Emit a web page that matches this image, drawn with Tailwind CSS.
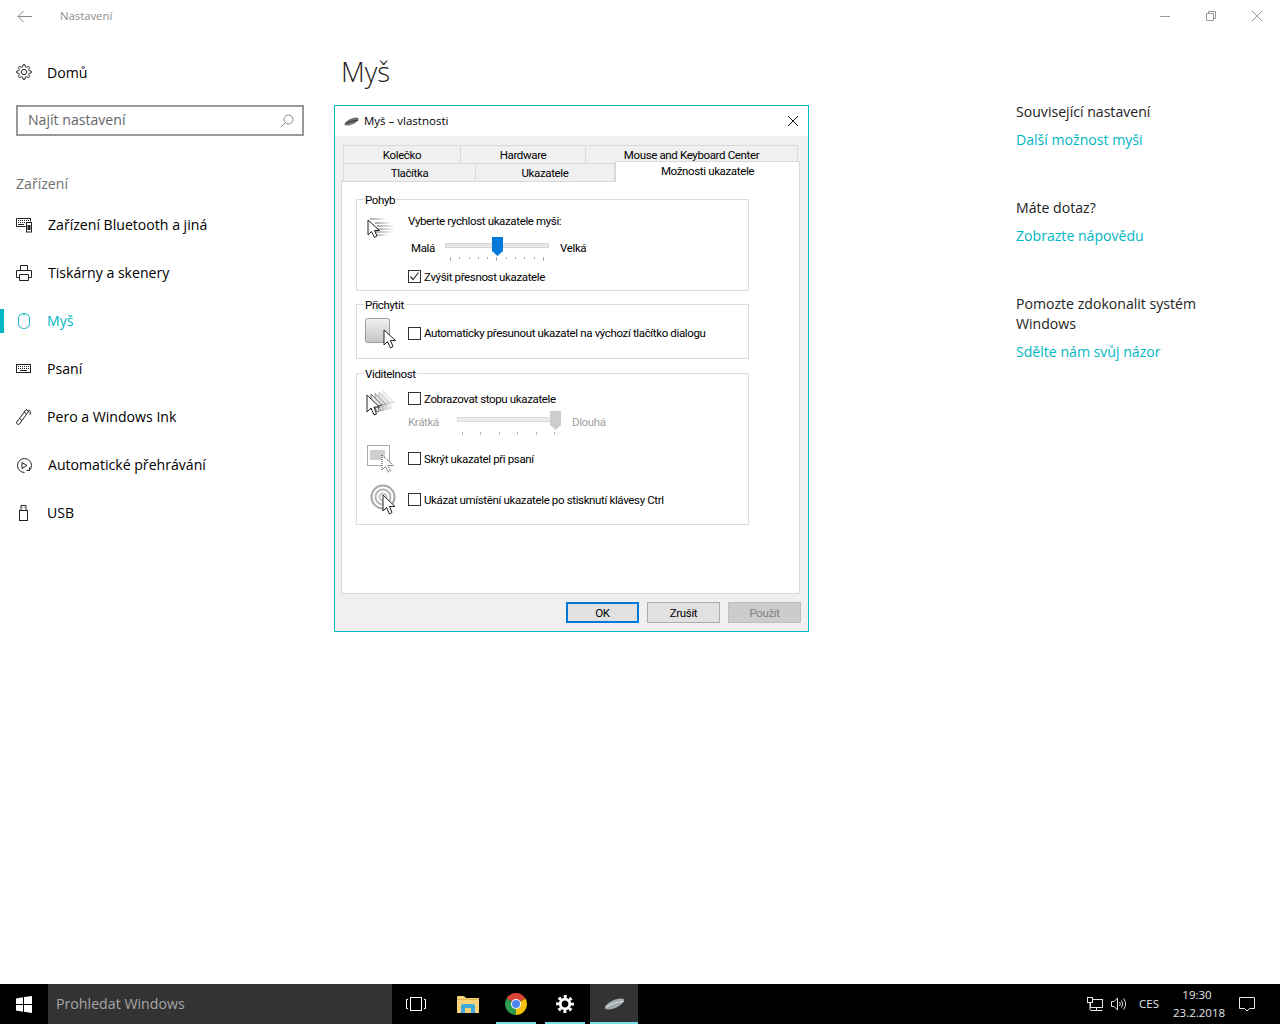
<!DOCTYPE html>
<html lang="cs">
<head>
<meta charset="UTF-8">
<meta name="viewport" content="width=device-width, initial-scale=1.0">
<title>Nastavení</title>
<script src="https://cdn.jsdelivr.net/npm/@tailwindcss/browser@4"></script>
</head>
<body class="font-['Open_Sans',sans-serif] text-black bg-white">
<div class="flex flex-col w-[1280px] h-[1024px] overflow-hidden">

  <!-- title bar -->
  <header class="flex items-center h-8 shrink-0">
    <svg class="ml-[17px] w-[15px] h-[13px]" viewBox="0 0 15 13" fill="none" stroke="#8a8a8a"><path d="M15 6.500H1M6.500 1L1 6.500 6.500 12"/></svg>
    <span class="ml-[28px] text-[11.3px] leading-4 text-[#8a8a8a]">Nastavení</span>
    <div class="ml-auto flex items-center">
      <svg class="w-[10px] h-[10px] mr-[36px]" viewBox="0 0 10 10" stroke="#999"><path d="M0 5.500H10"/></svg>
      <svg class="w-[10px] h-[10px] mr-[36px]" viewBox="0 0 10 10" fill="none" stroke="#999"><path d="M.5 2.500h7v7h-7zM2.500 2.500v-2h7v7h-2"/></svg>
      <svg class="w-[10px] h-[10px] mr-[18px]" viewBox="0 0 10 10" stroke="#999"><path d="M0 0L10 10M10 0L0 10"/></svg>
    </div>
  </header>

  <main class="flex flex-1 min-h-0">
    <!-- left menu -->
    <aside class="w-[334px] shrink-0">
      <div class="flex items-center h-12 mt-4 pl-4 text-[14.1px]">
        <svg class="w-4 h-4" viewBox="-8.500 -8.500 17 17" fill="none" stroke="#222" stroke-width="1">
          <defs><path id="tooth" d="M-1.280-5.550L-1.080-7.720H1.080L1.280-5.550A5.700 5.700 0 0 1 3.020-4.830"/></defs>
          <use href="#tooth"/><use href="#tooth" transform="rotate(45)"/><use href="#tooth" transform="rotate(90)"/><use href="#tooth" transform="rotate(135)"/><use href="#tooth" transform="rotate(180)"/><use href="#tooth" transform="rotate(225)"/><use href="#tooth" transform="rotate(270)"/><use href="#tooth" transform="rotate(315)"/>
          <circle r="2.800"/>
        </svg>
        <span class="ml-[15px] mt-px">Domů</span>
      </div>
      <div class="ml-4 mt-[9px] w-[288px] h-[31px] border-2 border-[#999] flex items-center pl-[10px] pr-2">
        <span class="text-[14.1px] text-[#666] -mt-px">Najít nastavení</span>
        <svg class="ml-auto w-[14px] h-[14px]" viewBox="0 0 14 14" fill="none" stroke="#888"><circle cx="8.500" cy="5.500" r="4.500"/><path d="M5.200 8.800L.7 13.300"/></svg>
      </div>
      <div class="ml-4 mt-[37px] mb-[6px] h-[22px] leading-[22px] text-[14.1px] text-[#6f6f6f]">Zařízení</div>
      <nav class="text-[14.1px]">
        <a class="flex items-center h-12">
          <span class="w-1 h-6"></span>
          <svg class="ml-3 w-4 h-4" viewBox="0 0 16 16" fill="none" stroke="#222"><path d="M.5 1.500h14v3M.5 1.500v8h9"/><path d="M2 3.500h1M4 3.500h1M6 3.500h1M8 3.500h1M10 3.500h1M12 3.500h1M2 5.500h1M4 5.500h1M6 5.500h1M8 5.500h1M2 7.500h6"/><rect x="10.500" y="5.500" width="5" height="9.500" fill="#fff"/><rect x="11.500" y="8" width="3" height="5" fill="#222" stroke="none"/></svg>
          <span class="ml-[16px]">Zařízení Bluetooth a jiná</span>
        </a>
        <a class="flex items-center h-12">
          <span class="w-1 h-6"></span>
          <svg class="ml-3 w-4 h-4" viewBox="0 0 16 16" fill="none" stroke="#222"><path d="M4.500 5.500v-5h7v5M3.500 12.500h-3v-7h15v7h-3"/><path d="M3.500 9.500h9v6h-9z"/></svg>
          <span class="ml-[16px]">Tiskárny a skenery</span>
        </a>
        <a class="flex items-center h-12 text-[#00b7c3]">
          <span class="w-1 h-6 bg-[#00b7c3]"></span>
          <svg class="ml-3 w-4 h-4" viewBox="0 0 16 16" fill="none" stroke="#00b7c3"><rect x="2.500" y=".5" width="11" height="15" rx="5"/><path d="M8 .5v2"/></svg>
          <span class="ml-[15px]">Myš</span>
        </a>
        <a class="flex items-center h-12">
          <span class="w-1 h-6"></span>
          <svg class="ml-3 w-4 h-4" viewBox="0 0 16 16" fill="none" stroke="#222"><rect x=".5" y="3.500" width="14" height="8"/><path d="M2 5.500h11M2 7.500h11" stroke-dasharray="1 1"/><path d="M4 9.500h7"/></svg>
          <span class="ml-[15px]">Psaní</span>
        </a>
        <a class="flex items-center h-12">
          <span class="w-1 h-6"></span>
          <svg class="ml-3 w-4 h-4" viewBox="0 0 16 16" fill="none" stroke="#222"><path d="M10 .5L12.500 2.500 6 11.500 3.500 9.500zM12 1c3 1 3.500 3 1.500 5M13 3.500l1 1M3.500 9.500L.8 13a1.700 1.700 0 0 0 2.700 2L6 11.500M8 3l2.500 2"/></svg>
          <span class="ml-[15px]">Pero a Windows Ink</span>
        </a>
        <a class="flex items-center h-12">
          <span class="w-1 h-6"></span>
          <svg class="ml-3 w-4 h-4" viewBox="0 0 16 16" fill="none" stroke="#222"><path d="M8.500 15.500A7 7 0 1 1 15.500 8.500a7 7 0 0 1-2 4.900M13.500 10.500v3h-3"/><path d="M6 5.500v6l5-3z"/></svg>
          <span class="ml-[16px]">Automatické přehrávání</span>
        </a>
        <a class="flex items-center h-12">
          <span class="w-1 h-6"></span>
          <svg class="ml-3 w-4 h-4" viewBox="0 0 16 16" fill="none" stroke="#222"><rect x="3.500" y="5.500" width="8" height="10"/><path d="M5 5.500v-5h5v5M6.500 2.500h.5M8 2.500h.5"/></svg>
          <span class="ml-[15px]">USB</span>
        </a>
      </nav>
    </aside>

    <!-- content -->
    <section class="w-[682px] shrink-0">
      <h1 class="pl-[7px] h-[73px] pt-[20px] text-[27.5px] leading-10 font-light text-[#222]">Myš</h1>

      <!-- dialog -->
      <div class="w-[475px] h-[527px] border border-[#00b7c3] bg-[#f0f0f0] font-['Roboto',sans-serif] text-[11.5px] tracking-[-0.36px] leading-[14px]">
        <div class="flex items-center h-[30px] bg-white pl-[9px] pr-[10px]">
          <svg class="w-[15px] h-[9px]" viewBox="0 0 15 9"><path d="M1 6.500C3 3 8 .5 12.500 .5c2 0 2.500 1.500 1.500 3-1.500 2.500-7 5-11 5-2.500 0-3-1-2-2z" fill="#6e7275"/><path d="M1 6.500C4 5 9 4 14 3" stroke="#333" fill="none"/></svg>
          <span class="ml-[5px] font-['Open_Sans',sans-serif] tracking-normal text-[11.500px]">Myš – vlastnosti</span>
          <svg class="ml-auto w-[10px] h-[10px]" viewBox="0 0 10 10" stroke="#111"><path d="M0 0L10 10M10 0L0 10"/></svg>
        </div>

        <div class="pt-[9px] pl-[6px]">
          <!-- tabs, top row -->
          <div class="flex ml-[2px] w-[455px] h-[18px]">
            <div class="w-[118px] h-[18px] border border-b-0 border-[#d9d9d9] text-center leading-[18px]">Kolečko</div>
            <div class="w-[125px] h-[18px] border border-b-0 border-l-0 border-[#d9d9d9] text-center leading-[18px]">Hardware</div>
            <div class="w-[212px] h-[18px] border border-b-0 border-l-0 border-[#d9d9d9] text-center leading-[18px]">Mouse and Keyboard Center</div>
          </div>
          <!-- tabs, bottom row -->
          <div class="flex ml-[2px] h-[18px]">
            <div class="w-[133px] h-[19px] border border-b-0 border-[#d9d9d9] text-center leading-[18px]">Tlačítka</div>
            <div class="w-[139px] h-[19px] border border-b-0 border-l-0 border-[#d9d9d9] text-center leading-[18px]">Ukazatele</div>
            <div class="relative z-10 w-[185px] h-[21px] -mt-[2px] border border-b-0 border-[#d9d9d9] bg-white text-center leading-[18px]">Možnosti ukazatele</div>
          </div>

          <!-- tab page -->
          <div class="w-[459px] h-[413px] border border-[#d9d9d9] bg-white pt-[17px] pl-[14px]">

            <div class="w-[393px] h-[92px] border border-[#dcdcdc]">
              <div class="-mt-2 ml-[7px] w-fit h-4 px-px bg-white leading-4">Pohyb</div>
              <div class="flex">
                <div class="w-[51px] pl-[10px] pt-[10px]">
                  <svg class="w-[29px] h-[24px]" viewBox="0 0 29 24" fill="none">
                    <defs><linearGradient id="fade"><stop offset="0" stop-color="#aaa"/><stop offset="1" stop-color="#fff"/></linearGradient></defs>
                    <rect x="3" y="0" width="17" height="2" fill="url(#fade)"/><rect x="8" y="4" width="17" height="2" fill="url(#fade)"/><rect x="10" y="7" width="18" height="2" fill="url(#fade)"/><rect x="10" y="10" width="18" height="2" fill="url(#fade)"/><rect x="8" y="13" width="19" height="2" fill="url(#fade)"/><rect x="7" y="16" width="15" height="2" fill="url(#fade)"/>
                    <path d="M1 2V17L4.500 13.500 7.500 19.500 10 18 7.500 12.500H12.500Z" fill="#fff" stroke="#222"/>
                  </svg>
                </div>
                <div>
                  <div class="mt-[6px] h-[14px]">Vyberte rychlost ukazatele myši:</div>
                  <div class="flex mt-2 h-[34px]">
                    <span class="w-[37px] pl-[3px] mt-[5px]">Malá</span>
                    <div class="relative w-[104px] h-[34px]">
                      <div class="mt-[7px] h-[5px] border border-[#d6d6d6] bg-[#e7e7e7]"></div>
                      <svg class="absolute left-[47px] top-px w-[11px] h-[19px]" viewBox="0 0 11 19"><path d="M0 0H11V14L5.500 19 0 14Z" fill="#0078d7"/></svg>
                      <div class="flex justify-between mt-[9px] mx-[5px] items-start">
                        <i class="w-px h-[4px] bg-[#aaa]"></i><i class="w-px h-[2px] bg-[#aaa]"></i><i class="w-px h-[2px] bg-[#aaa]"></i><i class="w-px h-[2px] bg-[#aaa]"></i><i class="w-px h-[2px] bg-[#aaa]"></i><i class="w-px h-[4px] bg-[#aaa]"></i><i class="w-px h-[2px] bg-[#aaa]"></i><i class="w-px h-[2px] bg-[#aaa]"></i><i class="w-px h-[2px] bg-[#aaa]"></i><i class="w-px h-[2px] bg-[#aaa]"></i><i class="w-px h-[4px] bg-[#aaa]"></i>
                      </div>
                    </div>
                    <span class="ml-[11px] mt-[5px]">Velká</span>
                  </div>
                  <div class="flex items-center h-[13px]">
                    <span class="w-[13px] h-[13px] border border-[#333] bg-white shrink-0">
                      <svg class="w-[11px] h-[11px]" viewBox="0 0 11 11" fill="none" stroke="#333" stroke-width="1.200"><path d="M1.500 5.500L4 8.500 9.500 1.500"/></svg>
                    </span>
                    <span class="ml-[3px]">Zvýšit přesnost ukazatele</span>
                  </div>
                </div>
              </div>
            </div>

            <div class="mt-[13px] w-[393px] h-[55px] border border-[#dcdcdc]">
              <div class="-mt-2 ml-[7px] w-fit h-4 px-px bg-white leading-4">Přichytit</div>
              <div class="flex">
                <div class="w-[51px] pl-2 pt-[5px]">
                  <svg class="w-[33px] h-[32px]" viewBox="0 0 33 32">
                    <defs><linearGradient id="snap" x2="0" y2="1"><stop offset="0" stop-color="#f2f2f2"/><stop offset="1" stop-color="#c4c4c4"/></linearGradient></defs>
                    <rect x=".5" y=".5" width="24" height="24" rx="2" fill="url(#snap)" stroke="#9a9a9a"/>
                    <path d="M19 12V27L22.500 23.500 25.500 30 28 28.500 25.500 22.500H30.500Z" fill="#fff" stroke="#222"/>
                  </svg>
                </div>
                <div class="flex items-center h-[13px] mt-[14px]">
                  <span class="w-[13px] h-[13px] border border-[#333] bg-white shrink-0"></span>
                  <span class="ml-[3px] -mt-px">Automaticky přesunout ukazatel na výchozí tlačítko dialogu</span>
                </div>
              </div>
            </div>

            <div class="mt-[14px] w-[393px] h-[152px] border border-[#dcdcdc]">
              <div class="-mt-2 ml-[7px] w-fit h-4 px-px bg-white leading-4">Viditelnost</div>
              <div class="flex h-[60px]">
                <div class="w-[51px] pl-[9px] pt-[9px]">
                  <svg class="w-[32px] h-[26px]" viewBox="0 0 32 26">
                    <path d="M17 0V16L20.500 12.500 23 18 25.500 17 23 11.500H28Z" fill="#f2f2f2" stroke="#dcdcdc"/>
                    <path d="M13 1V17L16.500 13.500 19 19 21.500 18 19 12.500H24Z" fill="#e6e6e6" stroke="#c4c4c4"/>
                    <path d="M9 2V18L12.500 14.500 15 20 17.500 19 15 13.500H20Z" fill="#ddd" stroke="#a0a0a0"/>
                    <path d="M5 3V19L8.500 15.500 11 21 13.500 20 11 14.500H16Z" fill="#eee" stroke="#666"/>
                    <path d="M1 4V21L5 17 8 24 10.500 23 8 16H13.500Z" fill="#fff" stroke="#222"/>
                  </svg>
                </div>
                <div>
                  <div class="flex items-center h-[13px] mt-[10px]">
                    <span class="w-[13px] h-[13px] border border-[#333] bg-white shrink-0"></span>
                    <span class="ml-[3px]">Zobrazovat stopu ukazatele</span>
                  </div>
                  <div class="flex mt-[6px] text-[#a0a0a0]">
                    <span class="w-[49px] mt-[4px]">Krátká</span>
                    <div class="relative w-[104px] h-[30px]">
                      <div class="mt-[6px] mr-[6px] h-[5px] border border-[#dcdcdc] bg-[#ececec]"></div>
                      <svg class="absolute left-[93px] top-0 w-[11px] h-[19px]" viewBox="0 0 11 19"><path d="M0 0H11V14L5.500 19 0 14Z" fill="#cdcdcd"/></svg>
                      <div class="flex justify-between mt-[10px] ml-[5px] mr-[6px]">
                        <i class="w-px h-[3px] bg-[#bbb]"></i><i class="w-px h-[3px] bg-[#bbb]"></i><i class="w-px h-[3px] bg-[#bbb]"></i><i class="w-px h-[3px] bg-[#bbb]"></i><i class="w-px h-[3px] bg-[#bbb]"></i><i class="w-px h-[3px] bg-[#bbb]"></i>
                      </div>
                    </div>
                    <span class="ml-[11px] mt-[4px]">Dlouhá</span>
                  </div>
                </div>
              </div>
              <div class="flex h-[41px]">
                <div class="w-[51px] pl-[10px] pt-[3px]">
                  <svg class="w-[28px] h-[28px]" viewBox="0 0 28 28">
                    <rect x=".5" y=".5" width="22" height="20" fill="#fff" stroke="#aaa"/><rect x="3" y="5" width="15" height="10" fill="#cfcfcf"/>
                    <path d="M15 10V25L18.500 21.500 21 27 23.500 26 21 20.500H26.500Z" fill="#fff" stroke="#333" stroke-dasharray="1 1"/>
                  </svg>
                </div>
                <div class="flex items-center h-[13px] mt-[10px]">
                  <span class="w-[13px] h-[13px] border border-[#333] bg-white shrink-0"></span>
                  <span class="ml-[3px]">Skrýt ukazatel při psaní</span>
                </div>
              </div>
              <div class="flex h-[41px]">
                <div class="w-[51px] pl-[13px] pt-px">
                  <svg class="w-[28px] h-[31px]" viewBox="0 0 28 31" fill="none">
                    <circle cx="13" cy="13" r="11.500" stroke="#a8a8a8" stroke-width="2"/><circle cx="13" cy="13" r="7.500" stroke="#b5b5b5" stroke-width="2"/><circle cx="13" cy="13" r="3.500" stroke="#c5c5c5" stroke-width="2"/>
                    <path d="M13 11V27L16.500 23.500 19.500 30 22 28.500 19.500 22.500H25Z" fill="#fff" stroke="#222"/>
                  </svg>
                </div>
                <div class="flex items-center h-[13px] mt-[10px]">
                  <span class="w-[13px] h-[13px] border border-[#333] bg-white shrink-0"></span>
                  <span class="ml-[3px]">Ukázat umístění ukazatele po stisknutí klávesy Ctrl</span>
                </div>
              </div>
            </div>
          </div>
        </div>

        <!-- dialog buttons -->
        <div class="flex justify-end gap-2 pr-[7px] mt-2">
          <button class="w-[73px] h-[21px] border-2 border-[#0078d7] bg-[#e1e1e1] leading-4">OK</button>
          <button class="w-[73px] h-[21px] border border-[#adadad] bg-[#e1e1e1] leading-4">Zrušit</button>
          <button class="w-[73px] h-[21px] border border-[#bfbfbf] bg-[#cccccc] text-[#838383] leading-4">Použít</button>
        </div>
      </div>
    </section>

    <!-- related settings -->
    <aside class="flex-1 pt-[70px] text-[14.1px] leading-5">
      <div class="text-[#222]">Související nastavení</div>
      <div class="mt-2 text-[#00b7c3]">Další možnost myši</div>
      <div class="mt-12 text-[#222]">Máte dotaz?</div>
      <div class="mt-2 text-[#00b7c3]">Zobrazte nápovědu</div>
      <div class="mt-12 w-[200px] text-[#222]">Pomozte zdokonalit systém Windows</div>
      <div class="mt-2 text-[#00b7c3]">Sdělte nám svůj názor</div>
    </aside>
  </main>

  <!-- taskbar -->
  <footer class="flex items-stretch h-10 shrink-0 bg-black text-white">
    <div class="flex items-center justify-center w-12">
      <svg class="w-4 h-[17px]" viewBox="0 0 16 17" fill="#fff"><path d="M0 2.500L7 1.300V8H0ZM8 1.100L16 0V8H8ZM0 9H7V15.700L0 14.500ZM8 9H16V17L8 15.800Z"/></svg>
    </div>
    <div class="flex items-center w-[344px] bg-[#333333] pl-2 text-[14.2px] text-[#a6a6a6]">Prohledat Windows</div>
    <div class="flex">
      <div class="flex items-center justify-center w-12">
        <svg class="w-5 h-[14px]" viewBox="0 0 20 14" fill="none" stroke="#fff"><rect x="4.500" y=".5" width="11" height="13"/><path d="M2 2.500H.5V11.500H2M18 2.500H19.500V11.500H18"/></svg>
      </div>
      <div class="flex items-center justify-center w-12 ml-1">
        <svg class="w-[22px] h-[18px]" viewBox="0 0 22 18"><path d="M0 2a1 1 0 0 1 1-1h6l2 2H22V18H0Z" fill="#f6d57a"/><path d="M0 4H22V5H0Z" fill="#e0b64e"/><path d="M4 18V11a2 2 0 0 1 2-2H16a2 2 0 0 1 2 2v7H14V13H8v5Z" fill="#3fa9dc"/></svg>
      </div>
      <div class="flex items-center justify-center w-10 ml-1 border-b-2 border-[#76dfe6] pt-[2px]">
        <svg class="w-[22px] h-[22px]" viewBox="0 0 22 22">
          <path d="M11 11L1.500 5.500A11 11 0 0 1 20.500 5.500Z" fill="#db4437"/>
          <path d="M11 11H22A11 11 0 0 1 11 22Z" fill="#f4c20d"/>
          <path d="M20.500 5.500A11 11 0 0 1 22 11H11Z" fill="#f4c20d"/>
          <path d="M11 11V22A11 11 0 0 1 1.500 5.500Z" fill="#2e9b4f"/>
          <circle cx="11" cy="11" r="5" fill="#fff"/><circle cx="11" cy="11" r="4" fill="#4d86ee"/>
        </svg>
      </div>
      <div class="flex items-center justify-center w-10 ml-[9px] border-b-2 border-[#76dfe6] pt-[2px]">
        <svg class="w-[18px] h-[18px]" viewBox="-9 -9 18 18" fill="none" stroke="#fff"><circle r="4.800" stroke-width="2.800"/><circle r="7.400" stroke-width="3" stroke-dasharray="3 2.810" stroke-dashoffset="1.500"/></svg>
      </div>
      <div class="flex items-center justify-center w-12 ml-[5px] bg-[#333333] border-b-2 border-[#76dfe6] pt-[2px]">
        <svg class="w-[21px] h-[12px]" viewBox="0 0 21 12"><path d="M1 9C3 5 10 .5 17 .5c3 0 4 1.500 2.500 3.500-2 3-9 7.500-14.500 7.500-3.500 0-5-1-4-2.500z" fill="#9fa9ad"/><path d="M2 9C7 6 13 4 19.500 3.500" stroke="#e0e5e7" fill="none"/></svg>
      </div>
    </div>
    <div class="ml-auto flex items-center text-[11.500px] leading-[18px] text-[#e6e6e6]">
      <svg class="w-4 h-[15px]" viewBox="0 0 16 15" fill="none" stroke="#e6e6e6"><rect x="3.500" y="2.500" width="12" height="8"/><rect x=".5" y=".5" width="5" height="5" fill="#000"/><path d="M9.500 10.500V13.500M3.500 13.500H15.500"/><path d="M3 5.500V13"/></svg>
      <svg class="ml-2 w-4 h-[14px]" viewBox="0 0 16 14" fill="none" stroke="#e6e6e6"><path d="M.5 4.500H3L6.500 1V13L3 9.500H.5ZM8.500 5a3 3 0 0 1 0 4M10.500 3.500a6 6 0 0 1 0 7M12.500 1.500a9 9 0 0 1 0 11"/></svg>
      <span class="ml-3 w-5 text-center">CES</span>
      <div class="ml-[14px] w-[48px] text-center">
        <div>19:30</div>
        <div>23.2.2018</div>
      </div>
      <svg class="ml-[18px] mr-[25px] w-4 h-[15px]" viewBox="0 0 16 15" fill="none" stroke="#e6e6e6"><path d="M.5.5H15.500V11.500H10.500L8 14 5.500 11.500H.5Z"/></svg>
    </div>
  </footer>
</div>
</body>
</html>
